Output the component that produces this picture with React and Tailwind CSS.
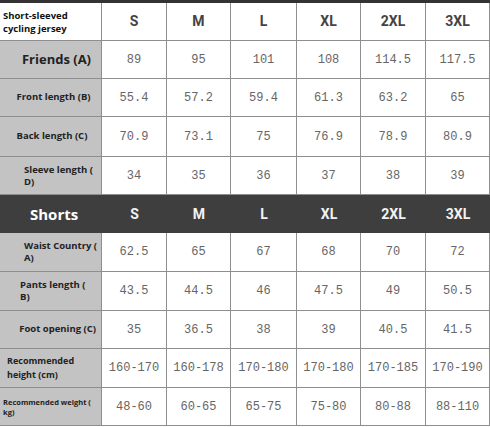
import React from "react";

const cols = ["w-[102px]", "w-[65px]", "w-[64px]", "w-[66px]", "w-[64px]", "w-[65px]", "w-[64px]"];
const sizes = ["S", "M", "L", "XL", "2XL", "3XL"];

// jersey + shorts measurement rows
const rows = [
  { h: "h-[38px]", label: ["Friends (A)"], cls: "justify-center pl-3 text-[13px]", vals: ["89", "95", "101", "108", "114.5", "117.5"] },
  { h: "h-[38px]", label: ["Front length (B)"], cls: "justify-center pl-[6px] text-[9.5px]", vals: ["55.4", "57.2", "59.4", "61.3", "63.2", "65"] },
  { h: "h-[40px]", label: ["Back length (C)"], cls: "justify-center pl-[3px] text-[9.5px]", vals: ["70.9", "73.1", "75", "76.9", "78.9", "80.9"] },
  { h: "h-[38px]", label: ["Sleeve length (", "D)"], cls: "pl-[24px] text-[9.5px] leading-[12px]", vals: ["34", "35", "36", "37", "38", "39"] },
];

const shorts = [
  { h: "h-[39px]", label: ["Waist Country (", "A)"], cls: "pl-[24px] text-[9.5px] leading-[12px]", vals: ["62.5", "65", "67", "68", "70", "72"] },
  { h: "h-[39px]", label: ["Pants length (", "B)"], cls: "pl-[20px] text-[9.5px] leading-[12px]", vals: ["43.5", "44.5", "46", "47.5", "49", "50.5"] },
  { h: "h-[38px]", label: ["Foot opening (C)"], cls: "justify-end pr-[5px] text-[9.5px]", vals: ["35", "36.5", "38", "39", "40.5", "41.5"] },
  { h: "h-[39px]", label: ["Recommended", "height (cm)"], cls: "pl-[7px] text-[9px] leading-[14px] text-[#4a4a4a]", vals: ["160-170", "160-178", "170-180", "170-180", "170-185", "170-190"] },
  { h: "h-[38px]", label: ["Recommended weight (", "kg)"], cls: "pl-[3px] text-[7.5px] leading-[10px] text-[#4a4a4a]", vals: ["48-60", "60-65", "65-75", "75-80", "80-88", "88-110"] },
];

const bodyFont = { fontFamily: '"Open Sans", "DejaVu Sans", sans-serif' };

function DataRow({ r }) {
  return (
    <div className={`flex ${r.h} border-b border-[#8e8e8e]`}>
      <div
        className={`${cols[0]} flex items-center bg-[#c3c3c3] border-r border-[#8e8e8e] font-bold text-[#222] ${r.cls}`}
        style={bodyFont}
      >
        <div className="whitespace-nowrap">
          {r.label.map((l) => (
            <div key={l}>{l}</div>
          ))}
        </div>
      </div>
      {r.vals.map((v, i) => (
        <div
          key={i}
          className={`${cols[i + 1]} flex items-center justify-center border-r border-[#8e8e8e] text-[12px] text-[#666] font-["Liberation_Mono",monospace]`}
        >
          {v}
        </div>
      ))}
    </div>
  );
}

function SizeHeader({ dark, label }) {
  return (
    <div className={`flex ${dark ? "h-[38px] bg-[#3e3e3e]" : "h-[38px] bg-white border-b border-[#8e8e8e]"}`}>
      <div
        className={`${cols[0]} flex items-center font-bold ${dark ? "pl-[30px] text-[15px] text-white" : "pl-[3px] pr-2 text-[9.5px] leading-[13px] text-[#111] border-r border-[#8e8e8e]"}`}
        style={bodyFont}
      >
        {label}
      </div>
      {sizes.map((s, i) => (
        <div
          key={s}
          className={`${cols[i + 1]} flex items-center justify-center font-bold text-[14px] font-["Roboto",sans-serif] ${dark ? "text-[#f2f2f2]" : "text-[#444] border-r border-[#8e8e8e]"}`}
        >
          {s}
        </div>
      ))}
    </div>
  );
}

export default function App() {
  return (
    <div className="w-[490px] h-[427px] bg-white overflow-hidden border-t-[3px] border-[#333]">
      <SizeHeader label="Short-sleeved cycling jersey" />
      {rows.map((r) => (
        <DataRow key={r.label[0]} r={r} />
      ))}
      <SizeHeader dark label="Shorts" />
      {shorts.map((r) => (
        <DataRow key={r.label[0]} r={r} />
      ))}
    </div>
  );
}
